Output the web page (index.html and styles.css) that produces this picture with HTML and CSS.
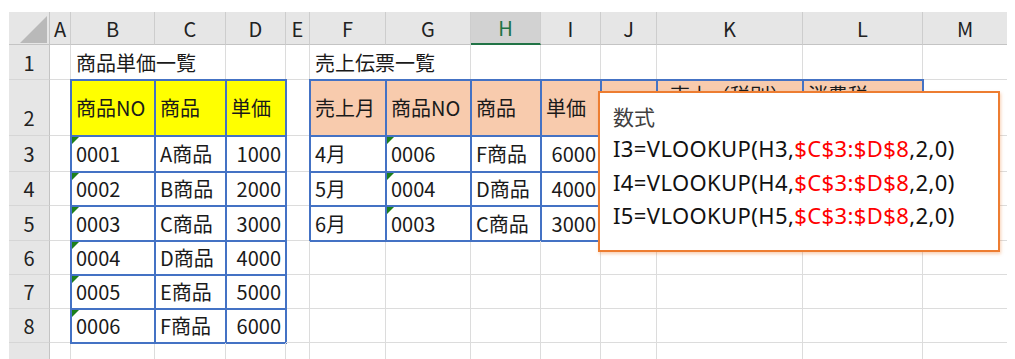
FILE: index.html
```html
<!DOCTYPE html>
<html lang="ja">
<head>
    <meta charset="UTF-8">
    <title>VLOOKUP</title>
    <link rel="stylesheet" href="styles.css">
</head>
<body>
    <div class="book">
        <div class="sheet">
            <!-- 列見出し -->
            <div class="corner">
                <svg width="40" height="32" viewBox="0 0 40 32"><polygon points="38,4 38,31 11,31" fill="#b9b9b9"/></svg>
            </div>
            <div class="ch">A</div>
            <div class="ch">B</div>
            <div class="ch">C</div>
            <div class="ch">D</div>
            <div class="ch">E</div>
            <div class="ch">F</div>
            <div class="ch">G</div>
            <div class="ch sel">H</div>
            <div class="ch">I</div>
            <div class="ch">J</div>
            <div class="ch">K</div>
            <div class="ch">L</div>
            <div class="ch e">M</div>

            <!-- 1行目 -->
            <div class="rh">1</div>
            <div class="c"></div>
            <div class="c span2">商品単価一覧</div>
            <div class="c"></div>
            <div class="c"></div>
            <div class="c span2">売上伝票一覧</div>
            <div class="c"></div>
            <div class="c"></div>
            <div class="c"></div>
            <div class="c"></div>
            <div class="c"></div>
            <div class="c e"></div>

            <!-- 2行目 見出し -->
            <div class="rh low">2</div>
            <div class="c"></div>
            <div class="c t yel">商品NO</div>
            <div class="c t yel">商品</div>
            <div class="c t yel">単価</div>
            <div class="c"></div>
            <div class="c t org">売上月</div>
            <div class="c t org">商品NO</div>
            <div class="c t org">商品</div>
            <div class="c t org">単価</div>
            <div class="c t org"></div>
            <div class="c t org top ctr">売上（税別）</div>
            <div class="c t org top">消費税</div>
            <div class="c e"></div>

            <!-- 3行目 -->
            <div class="rh">3</div>
            <div class="c"></div>
            <div class="c t tri">0001</div>
            <div class="c t">A商品</div>
            <div class="c t r">1000</div>
            <div class="c"></div>
            <div class="c t">4月</div>
            <div class="c t tri">0006</div>
            <div class="c t">F商品</div>
            <div class="c t r">6000</div>
            <div class="c t"></div>
            <div class="c t"></div>
            <div class="c t"></div>
            <div class="c e"></div>

            <!-- 4行目 -->
            <div class="rh">4</div>
            <div class="c"></div>
            <div class="c t tri">0002</div>
            <div class="c t">B商品</div>
            <div class="c t r">2000</div>
            <div class="c"></div>
            <div class="c t">5月</div>
            <div class="c t tri">0004</div>
            <div class="c t">D商品</div>
            <div class="c t r">4000</div>
            <div class="c t"></div>
            <div class="c t"></div>
            <div class="c t"></div>
            <div class="c e"></div>

            <!-- 5行目 -->
            <div class="rh">5</div>
            <div class="c"></div>
            <div class="c t tri">0003</div>
            <div class="c t">C商品</div>
            <div class="c t r">3000</div>
            <div class="c"></div>
            <div class="c t">6月</div>
            <div class="c t tri">0003</div>
            <div class="c t">C商品</div>
            <div class="c t r">3000</div>
            <div class="c t"></div>
            <div class="c t"></div>
            <div class="c t"></div>
            <div class="c e"></div>

            <!-- 6行目 -->
            <div class="rh">6</div>
            <div class="c"></div>
            <div class="c t tri">0004</div>
            <div class="c t">D商品</div>
            <div class="c t r">4000</div>
            <div class="c"></div>
            <div class="c"></div>
            <div class="c"></div>
            <div class="c"></div>
            <div class="c"></div>
            <div class="c"></div>
            <div class="c"></div>
            <div class="c"></div>
            <div class="c e"></div>

            <!-- 7行目 -->
            <div class="rh">7</div>
            <div class="c"></div>
            <div class="c t tri">0005</div>
            <div class="c t">E商品</div>
            <div class="c t r">5000</div>
            <div class="c"></div>
            <div class="c"></div>
            <div class="c"></div>
            <div class="c"></div>
            <div class="c"></div>
            <div class="c"></div>
            <div class="c"></div>
            <div class="c"></div>
            <div class="c e"></div>

            <!-- 8行目 -->
            <div class="rh">8</div>
            <div class="c"></div>
            <div class="c t tri">0006</div>
            <div class="c t">F商品</div>
            <div class="c t r">6000</div>
            <div class="c"></div>
            <div class="c"></div>
            <div class="c"></div>
            <div class="c"></div>
            <div class="c"></div>
            <div class="c"></div>
            <div class="c"></div>
            <div class="c"></div>
            <div class="c e"></div>

            <!-- 9行目（画面下端で切れる） -->
            <div class="rh"></div>
            <div class="c"></div>
            <div class="c"></div>
            <div class="c"></div>
            <div class="c"></div>
            <div class="c"></div>
            <div class="c"></div>
            <div class="c"></div>
            <div class="c"></div>
            <div class="c"></div>
            <div class="c"></div>
            <div class="c"></div>
            <div class="c"></div>
            <div class="c e"></div>
        </div>

        <!-- 数式の説明 -->
        <div class="note">
            <p class="note-title">数式</p>
            <p class="formula">I3=VLOOKUP(H3,<span class="ref">$C$3:$D$8</span>,2,0)</p>
            <p class="formula">I4=VLOOKUP(H4,<span class="ref">$C$3:$D$8</span>,2,0)</p>
            <p class="formula">I5=VLOOKUP(H5,<span class="ref">$C$3:$D$8</span>,2,0)</p>
        </div>
    </div>
</body>
</html>
```

FILE: styles.css
```css
* {
    margin: 0;
    padding: 0;
    box-sizing: border-box;
}

body {
    background: #fff;
    font-family: "Noto Sans CJK JP", sans-serif;
    color: #1a1a1a;
    overflow: hidden;
}

.book {
    position: relative;
    width: 998px;
    height: 347px;
    margin: 12px 0 0 9px;
    overflow: hidden;
}

.sheet {
    display: grid;
    grid-template-columns: 41px 21px 84px 71px 60px 24px 76px 85px 70px 60px 56px 146px 120px 84px;
    grid-template-rows: 33px 35px 56px 36px 34px 35px 34px 34px 34px 34px;
    position: relative;
    z-index: 0;
    font-size: 20px;
    line-height: 29px;
}

/* 列見出し */
.corner {
    background: #e6e6e6;
    border-right: 1px solid #c4c4c4;
    border-bottom: 1px solid #c4c4c4;
}

.corner svg {
    display: block;
}

.ch {
    background: #e6e6e6;
    border-right: 1px solid #cdcdcd;
    border-bottom: 1px solid #c4c4c4;
    display: flex;
    justify-content: center;
    align-items: center;
    color: #222;
}

.ch.sel {
    background: #d2d2d2;
    color: #217346;
    border-bottom: 2px solid #217346;
}

/* 行見出し */
.rh {
    background: #e6e6e6;
    border-right: 1px solid #c4c4c4;
    border-bottom: 1px solid #d6d6d6;
    display: flex;
    justify-content: center;
    align-items: center;
    color: #222;
}

.rh.low {
    align-items: flex-end;
    padding-bottom: 3px;
}

/* セル */
.c {
    border-right: 1px solid #dcdcdc;
    border-bottom: 1px solid #dcdcdc;
    display: flex;
    align-items: center;
    padding: 0 4px 0 5px;
    white-space: nowrap;
    color: #1a1a1a;
}

.c.e,
.ch.e {
    border-right: none;
}

.span2 {
    grid-column: span 2;
}

.t {
    outline: 2px solid #4472c4;
    outline-offset: -1px;
}

.yel {
    background: #ffff00;
}

.org {
    background: #f8cbad;
}

.r {
    justify-content: flex-end;
}

.top {
    align-items: flex-start;
}

.ctr {
    justify-content: center;
}

/* 文字列として入力された数値の緑の三角 */
.tri {
    position: relative;
}

.tri::before {
    content: "";
    position: absolute;
    left: 1px;
    top: 1px;
    border-top: 7px solid #1c7f1c;
    border-right: 7px solid transparent;
}

/* 数式の吹き出し */
.note {
    position: absolute;
    left: 589px;
    top: 79px;
    width: 402px;
    height: 161px;
    border: 2px solid #ed7d31;
    background: #fff;
    box-shadow: 1px 2px 3px rgba(237, 125, 49, 0.35);
    z-index: 1;
    padding: 8px 0 0 13px;
}

.note-title {
    font-size: 21px;
    line-height: 31px;
    color: #404040;
}

.formula {
    font-family: "Noto Sans", "Noto Sans CJK JP", sans-serif;
    font-size: 22px;
    line-height: 33.5px;
    letter-spacing: 0.4px;
    color: #111;
}

.ref {
    color: #ff0000;
}
```
